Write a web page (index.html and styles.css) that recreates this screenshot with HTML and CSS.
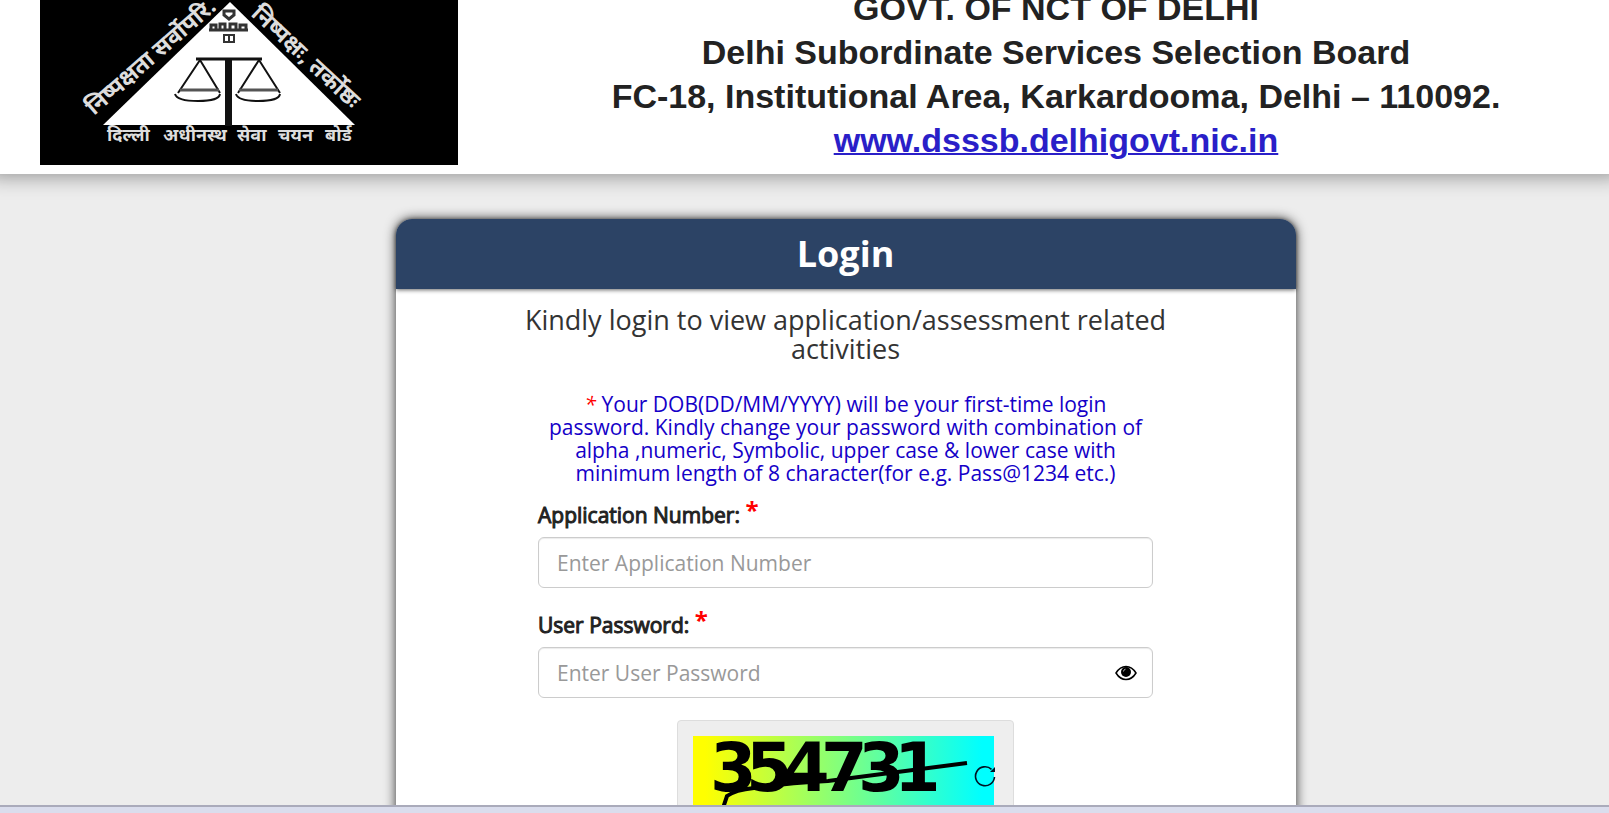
FILE: index.html
```
<!DOCTYPE html>
<html lang="en">
<head>
    <meta charset="UTF-8">
    <meta name="viewport" content="width=device-width, initial-scale=1.0">
    <title>DSSSB Login</title>
    <link rel="stylesheet" href="styles.css">
</head>
<body>
    <header class="site-header">
        <svg class="logo" viewBox="0 0 418 165" role="img" aria-label="DSSSB logo">
            <rect width="418" height="165" fill="#000"/>
            <path d="M190 2L315 125H63z" fill="#fff"/>
            <g fill="none" stroke="#111" stroke-width="3">
                <path d="M156 59H222"/>
                <path d="M188.500 58V126" stroke-width="7"/>
                <path d="M160 60L138 93M160 60L180 93M219 60L198 93M219 60L240 93" stroke-width="2"/>
                <path d="M140 90H179M199 90H238" stroke-width="3" stroke="#555"/>
                <path d="M135 94Q137 101 158 101Q179 101 180 94M196 94Q198 101 218 101Q239 101 240 94" stroke-width="2"/>
            </g>
            <g fill="none" stroke="#333" stroke-width="3">
                <path d="M184 15V11H194V15L189 19z"/>
                <path d="M171 30V25H176V30M180 30V24H185V30M190 30V24H196V30M200 30V25H206V30M169 30H208"/>
                <path d="M184 41V35H194V41M189 35V42M183 42H195" stroke-width="2"/>
            </g>
            <g class="logo-text">
                <g font-size="18">
                    <text x="67" y="141">दिल्ली</text>
                    <text x="123" y="141">अधीनस्थ</text>
                    <text x="197" y="141">सेवा</text>
                    <text x="238" y="141">चयन</text>
                    <text x="285" y="141">बोर्ड</text>
                </g>
                <g font-size="23">
                    <text transform="translate(54 116) rotate(-41)">निष्पक्षता सर्वोपरि.</text>
                    <text transform="translate(210 15) rotate(43)">निष्पक्षः, तर्कोष्ठः</text>
                </g>
            </g>
        </svg>
        <div class="board">
            <p>GOVT. OF NCT OF DELHI</p>
            <p>Delhi Subordinate Services Selection Board</p>
            <p>FC-18, Institutional Area, Karkardooma, Delhi – 110092.</p>
            <p><a href="#">www.dsssb.delhigovt.nic.in</a></p>
        </div>
    </header>

    <main class="content">
        <section class="login-card">
            <h1>Login</h1>
            <form class="login-form">
                <h2>Kindly login to view application/assessment related activities</h2>
                <div class="fields">
                    <p class="note"><span class="star">*</span> Your DOB(DD/MM/YYYY) will be your first-time login password. Kindly change your password with combination of alpha ,numeric, Symbolic, upper case &amp; lower case with minimum length of 8 character(for e.g. Pass@1234 etc.)</p>
                    <div class="form-group">
                        <label for="appNo">Application Number: <span class="required">*</span></label>
                        <input type="text" id="appNo" placeholder="Enter Application Number">
                    </div>
                    <div class="form-group">
                        <label for="password">User Password: <span class="required">*</span></label>
                        <div class="password-box">
                            <input type="password" id="password" placeholder="Enter User Password">
                            <button type="button" class="eye-btn" aria-label="Show password">
                                <svg viewBox="0 0 22 16" width="22" height="16">
                                    <path d="M1 8Q5 1.500 11 1.500T21 8Q17 14.500 11 14.500T1 8z" fill="#fff" stroke="#000" stroke-width="1.500"/>
                                    <circle cx="11" cy="7" r="5" fill="#000"/>
                                    <path d="M8.500 6.500Q8.500 4.500 10.500 4.200" fill="none" stroke="#aaa"/>
                                </svg>
                            </button>
                        </div>
                    </div>
                    <div class="captcha">
                        <svg class="captcha-img" viewBox="0 0 301 90" role="img" aria-label="Captcha">
                            <defs>
                                <linearGradient id="captchaBg">
                                    <stop offset="0.04" stop-color="#ff0"/>
                                    <stop offset="0.96" stop-color="#0ff"/>
                                </linearGradient>
                            </defs>
                            <rect width="301" height="90" fill="url(#captchaBg)"/>
                            <text class="captcha-text" x="17 53 90 128 165 201" y="55">354731</text>
                            <path d="M31 90V69L34 60Q42 54 61 52Q95 47 135 45L274 27" fill="none" stroke="#000" stroke-width="4"/>
                        </svg>
                        <button type="button" class="refresh-btn" aria-label="Refresh captcha">
                            <svg viewBox="0 0 22 22" width="22" height="22">
                                <path d="M20.500 12A9.500 9.500 0 1 1 17.500 4.300" fill="none" stroke="#012" stroke-width="1.600"/>
                                <path d="M21 2V7H16z" fill="#012"/>
                            </svg>
                        </button>
                    </div>
                </div>
            </form>
        </section>
    </main>

    <footer class="bottom-bar"></footer>
</body>
</html>
```

FILE: styles.css
```
* {
    box-sizing: border-box;
}

body {
    margin: 0;
    height: 100vh;
    overflow: hidden;
    display: flex;
    flex-direction: column;
    background-color: #ededed;
    font-family: 'Open Sans', 'Noto Sans', sans-serif;
    color: #333;
}

.site-header {
    position: relative;
    display: flex;
    align-items: flex-end;
    gap: 45px;
    height: 174px;
    padding: 0 0 9px 40px;
    flex-shrink: 0;
    background-color: #fff;
    box-shadow: 0 -10px 20px 12px rgba(0, 0, 0, 0.4);
}

.logo {
    width: 418px;
    height: 165px;
    flex-shrink: 0;
}

.logo-text {
    fill: #ddd;
    font-family: 'Noto Sans', sans-serif;
    font-weight: bold;
}

.board {
    flex: 1;
    padding-bottom: 3px;
    text-align: center;
    font-family: 'Liberation Sans', Arial, sans-serif;
    font-size: 34px;
    line-height: 44px;
    font-weight: bold;
    color: #222;
}

.board p {
    margin: 0;
}

.board a {
    color: #2a1fc8;
    text-decoration-thickness: 2px;
}

.content {
    flex: 1;
    min-height: 0;
    overflow: hidden;
    padding: 45px 0 0 82px;
}

.login-card {
    max-width: 900px;
    margin: 0 auto;
    border-radius: 16px 16px 0 0;
    background-color: #fff;
    box-shadow: 0 0 12px rgba(0, 0, 0, 0.8);
}

.login-card h1 {
    margin: 0;
    height: 70px;
    border-radius: 16px 16px 0 0;
    background-color: #2c4365;
    box-shadow: 0 1px 4px rgba(0, 0, 0, 0.6);
    color: #fff;
    font-size: 36px;
    line-height: 70px;
    text-align: center;
}

.login-form {
    max-width: 645px;
    margin: 0 auto;
    padding: 16px 0 60px;
}

.login-form h2 {
    margin: 0 0 30px;
    font-size: 27px;
    line-height: 29px;
    font-weight: normal;
    text-align: center;
}

.fields {
    padding: 0 15px;
}

.note {
    margin: 0 0 15px;
    color: #1400c8;
    font-size: 21px;
    line-height: 23px;
    text-align: center;
}

.star {
    color: #f00;
    font-style: italic;
}

.form-group {
    margin-bottom: 22px;
}

.form-group label {
    display: block;
    margin-bottom: 7px;
    color: #222;
    font-size: 21px;
    line-height: 29px;
    -webkit-text-stroke: 1px #222;
}

.required {
    color: #f00;
    font-size: 24px;
    line-height: 20px;
    font-weight: bold;
    vertical-align: 4px;
    -webkit-text-stroke: 0;
}

.form-group input {
    display: block;
    width: 100%;
    height: 51px;
    padding: 0 18px;
    border: 1px solid #ccc;
    border-radius: 6px;
    background-color: #fff;
    box-shadow: inset 0 1px 1px rgba(0, 0, 0, 0.08);
    font-family: inherit;
    font-size: 21px;
    color: #555;
}

.form-group input::placeholder {
    color: #999;
}

.password-box {
    position: relative;
}

.eye-btn,
.refresh-btn {
    position: absolute;
    padding: 0;
    border: none;
    background: none;
    cursor: pointer;
}

.eye-btn svg,
.refresh-btn svg {
    display: block;
}

.eye-btn {
    top: 18px;
    right: 16px;
}

.captcha {
    position: relative;
    width: 337px;
    margin: 0 auto;
    padding: 15px 19px 15px 15px;
    border: 1px solid #ddd;
    border-radius: 4px;
    background-color: #eee;
}

.captcha-img {
    display: block;
    width: 100%;
}

.captcha-text {
    font-family: 'DejaVu Sans', sans-serif;
    font-size: 67px;
    font-weight: bold;
}

.refresh-btn {
    top: 44px;
    right: 17px;
}

.bottom-bar {
    height: 8px;
    flex-shrink: 0;
    border-top: 2px solid #aaabbb;
    background-color: #dadded;
}
```
